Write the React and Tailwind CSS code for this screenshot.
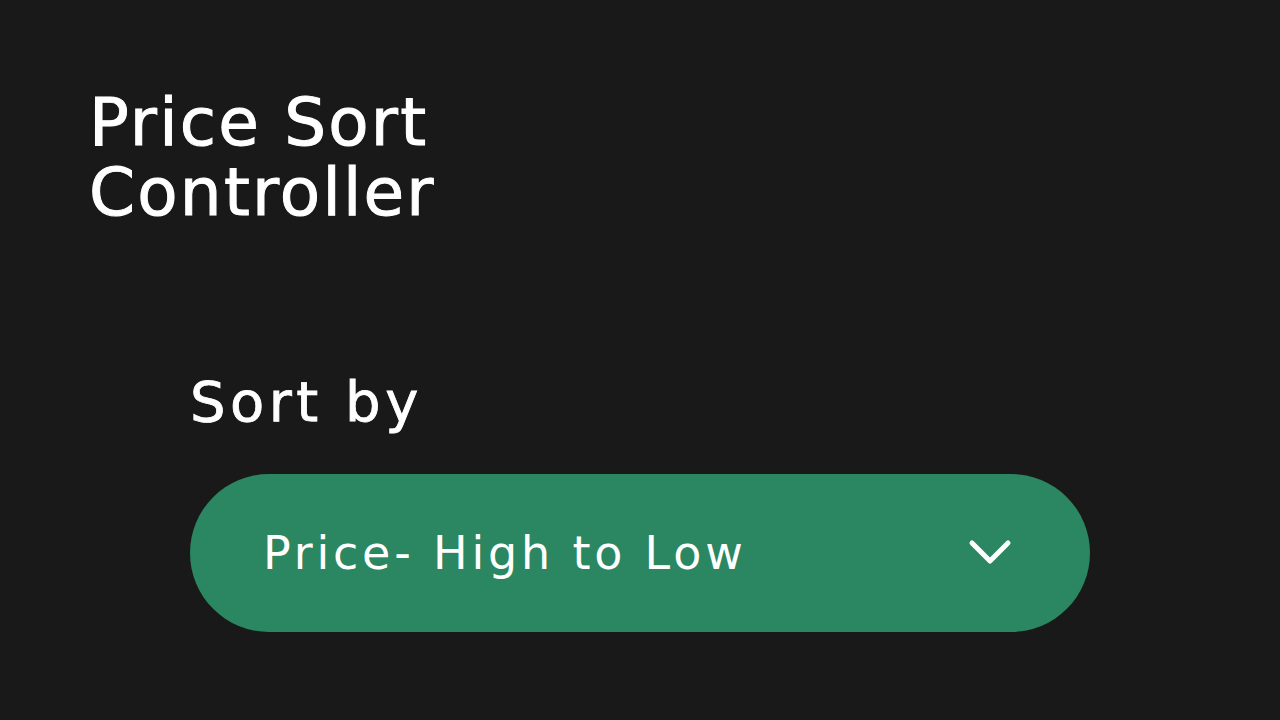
import React, { useState } from "react";

const options = ["Price- High to Low", "Price- Low to High"];

const App = () => {
    const [selected] = useState(options[0]);

    return (
        <div className="min-h-screen w-full bg-[#191919] text-white font-['DejaVu_Sans',sans-serif]">
            <div className="pl-[89px] pt-[88px]">
                <h1 className="text-[66px] leading-[70px] font-normal tracking-[2.2px] [-webkit-text-stroke:1px_white]">
                    Price Sort
                    <br />
                    Controller
                </h1>
            </div>
            <div className="pl-[190px] pt-[144px]">
                <label className="block text-[56px] leading-[60px] font-normal tracking-[4.5px] [-webkit-text-stroke:0.8px_white]">Sort by</label>
                <div className="mt-[42px] w-[900px] h-[158px] rounded-full bg-[#2a8761] flex items-center justify-between pl-[73px] pr-[78px]">
                    <span className="text-[46px] font-normal tracking-[3.8px]">{selected}</span>
                    <svg width="44" height="28" viewBox="0 0 44 28" fill="none">
                        <path d="M4 4 L22 22 L40 4" stroke="white" strokeWidth="5" strokeLinecap="round" strokeLinejoin="round" />
                    </svg>
                </div>
            </div>
        </div>
    );
};

export default App;
